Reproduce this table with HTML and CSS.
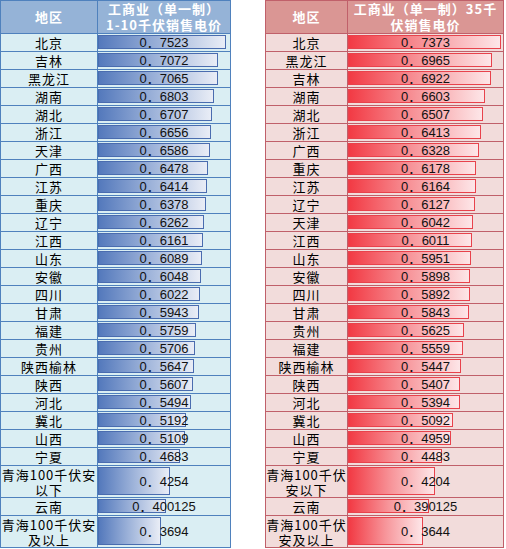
FILE: index.html
```html
<!DOCTYPE html>
<html lang="zh-CN">
<head>
<meta charset="utf-8">
<title>工商业销售电价</title>
<link rel="stylesheet" href="styles.css">
</head>
<body>
<div class="page">
  <div class="sheet blue">
    <div class="hd">地区</div>
    <div class="hd hd-val">工商业（单一制）<br>1-10千伏销售电价</div>
    <div class="nm">北京</div><div class="vl"><span class="bar" style="width:128px"></span><span class="num">0．7523</span></div>
    <div class="nm">吉林</div><div class="vl"><span class="bar" style="width:120px"></span><span class="num">0．7072</span></div>
    <div class="nm">黑龙江</div><div class="vl"><span class="bar" style="width:120px"></span><span class="num">0．7065</span></div>
    <div class="nm">湖南</div><div class="vl"><span class="bar" style="width:116px"></span><span class="num">0．6803</span></div>
    <div class="nm">湖北</div><div class="vl"><span class="bar" style="width:114px"></span><span class="num">0．6707</span></div>
    <div class="nm">浙江</div><div class="vl"><span class="bar" style="width:113px"></span><span class="num">0．6656</span></div>
    <div class="nm">天津</div><div class="vl"><span class="bar" style="width:112px"></span><span class="num">0．6586</span></div>
    <div class="nm">广西</div><div class="vl"><span class="bar" style="width:110px"></span><span class="num">0．6478</span></div>
    <div class="nm">江苏</div><div class="vl"><span class="bar" style="width:109px"></span><span class="num">0．6414</span></div>
    <div class="nm">重庆</div><div class="vl"><span class="bar" style="width:108px"></span><span class="num">0．6378</span></div>
    <div class="nm">辽宁</div><div class="vl"><span class="bar" style="width:106px"></span><span class="num">0．6262</span></div>
    <div class="nm">江西</div><div class="vl"><span class="bar" style="width:105px"></span><span class="num">0．6161</span></div>
    <div class="nm">山东</div><div class="vl"><span class="bar" style="width:104px"></span><span class="num">0．6089</span></div>
    <div class="nm">安徽</div><div class="vl"><span class="bar" style="width:103px"></span><span class="num">0．6048</span></div>
    <div class="nm">四川</div><div class="vl"><span class="bar" style="width:102px"></span><span class="num">0．6022</span></div>
    <div class="nm">甘肃</div><div class="vl"><span class="bar" style="width:101px"></span><span class="num">0．5943</span></div>
    <div class="nm">福建</div><div class="vl"><span class="bar" style="width:98px"></span><span class="num">0．5759</span></div>
    <div class="nm">贵州</div><div class="vl"><span class="bar" style="width:97px"></span><span class="num">0．5706</span></div>
    <div class="nm">陕西榆林</div><div class="vl"><span class="bar" style="width:96px"></span><span class="num">0．5647</span></div>
    <div class="nm">陕西</div><div class="vl"><span class="bar" style="width:95px"></span><span class="num">0．5607</span></div>
    <div class="nm">河北</div><div class="vl"><span class="bar" style="width:93px"></span><span class="num">0．5494</span></div>
    <div class="nm">冀北</div><div class="vl"><span class="bar" style="width:88px"></span><span class="num">0．5192</span></div>
    <div class="nm">山西</div><div class="vl"><span class="bar" style="width:87px"></span><span class="num">0．5109</span></div>
    <div class="nm">宁夏</div><div class="vl"><span class="bar" style="width:82px"></span><span class="num">0．4683</span></div>
    <div class="nm tall">青海100千伏安<br>以下</div><div class="vl tall"><span class="bar" style="width:72px"></span><span class="num">0．4254</span></div>
    <div class="nm">云南</div><div class="vl"><span class="bar" style="width:68px"></span><span class="num">0．400125</span></div>
    <div class="nm tall">青海100千伏安<br>及以上</div><div class="vl tall"><span class="bar" style="width:63px"></span><span class="num">0．3694</span></div>
  </div>

  <div class="sheet red">
    <div class="hd">地区</div>
    <div class="hd hd-val">工商业（单一制）35千<br>伏销售电价</div>
    <div class="nm">北京</div><div class="vl"><span class="bar" style="width:153px"></span><span class="num">0．7373</span></div>
    <div class="nm">黑龙江</div><div class="vl"><span class="bar" style="width:144px"></span><span class="num">0．6965</span></div>
    <div class="nm">吉林</div><div class="vl"><span class="bar" style="width:143px"></span><span class="num">0．6922</span></div>
    <div class="nm">湖南</div><div class="vl"><span class="bar" style="width:137px"></span><span class="num">0．6603</span></div>
    <div class="nm">湖北</div><div class="vl"><span class="bar" style="width:135px"></span><span class="num">0．6507</span></div>
    <div class="nm">浙江</div><div class="vl"><span class="bar" style="width:133px"></span><span class="num">0．6413</span></div>
    <div class="nm">广西</div><div class="vl"><span class="bar" style="width:131px"></span><span class="num">0．6328</span></div>
    <div class="nm">重庆</div><div class="vl"><span class="bar" style="width:128px"></span><span class="num">0．6178</span></div>
    <div class="nm">江苏</div><div class="vl"><span class="bar" style="width:128px"></span><span class="num">0．6164</span></div>
    <div class="nm">辽宁</div><div class="vl"><span class="bar" style="width:127px"></span><span class="num">0．6127</span></div>
    <div class="nm">天津</div><div class="vl"><span class="bar" style="width:125px"></span><span class="num">0．6042</span></div>
    <div class="nm">江西</div><div class="vl"><span class="bar" style="width:124px"></span><span class="num">0．6011</span></div>
    <div class="nm">山东</div><div class="vl"><span class="bar" style="width:123px"></span><span class="num">0．5951</span></div>
    <div class="nm">安徽</div><div class="vl"><span class="bar" style="width:122px"></span><span class="num">0．5898</span></div>
    <div class="nm">四川</div><div class="vl"><span class="bar" style="width:122px"></span><span class="num">0．5892</span></div>
    <div class="nm">甘肃</div><div class="vl"><span class="bar" style="width:121px"></span><span class="num">0．5843</span></div>
    <div class="nm">贵州</div><div class="vl"><span class="bar" style="width:116px"></span><span class="num">0．5625</span></div>
    <div class="nm">福建</div><div class="vl"><span class="bar" style="width:115px"></span><span class="num">0．5559</span></div>
    <div class="nm">陕西榆林</div><div class="vl"><span class="bar" style="width:113px"></span><span class="num">0．5447</span></div>
    <div class="nm">陕西</div><div class="vl"><span class="bar" style="width:112px"></span><span class="num">0．5407</span></div>
    <div class="nm">河北</div><div class="vl"><span class="bar" style="width:112px"></span><span class="num">0．5394</span></div>
    <div class="nm">冀北</div><div class="vl"><span class="bar" style="width:105px"></span><span class="num">0．5092</span></div>
    <div class="nm">山西</div><div class="vl"><span class="bar" style="width:103px"></span><span class="num">0．4959</span></div>
    <div class="nm">宁夏</div><div class="vl"><span class="bar" style="width:94px"></span><span class="num">0．4483</span></div>
    <div class="nm tall">青海100千伏<br>安以下</div><div class="vl tall"><span class="bar" style="width:87px"></span><span class="num">0．4204</span></div>
    <div class="nm">云南</div><div class="vl"><span class="bar" style="width:81px"></span><span class="num">0．390125</span></div>
    <div class="nm tall">青海100千伏<br>安及以上</div><div class="vl tall"><span class="bar" style="width:75px"></span><span class="num">0．3644</span></div>
  </div>
</div>
</body>
</html>
```

FILE: styles.css
```css
html, body {
  margin: 0;
  padding: 0;
  background: #ffffff;
}

.page {
  display: flex;
  align-items: flex-start;
  gap: 34px;
  font-family: "Noto Sans CJK SC", "Noto Sans", sans-serif;
  color: #000;
}

.sheet {
  display: grid;
  grid-auto-rows: auto;
  gap: 1px;
  padding: 1px;
}

.sheet.blue {
  grid-template-columns: 96px 132px;
  background: #4f81bd;
}

.sheet.red {
  grid-template-columns: 81px 155px;
  background: #c0606a;
}

.hd {
  height: 32px;
  display: flex;
  align-items: center;
  justify-content: center;
  text-align: center;
  color: #ffffff;
  font-weight: bold;
  font-size: 13px;
  line-height: 16px;
  letter-spacing: 1px;
  white-space: nowrap;
}

.blue .hd { background: #95b3d7; }
.red .hd { background: #da9694; }

.nm, .vl {
  height: 17px;
  display: flex;
  align-items: center;
  justify-content: center;
  text-align: center;
  white-space: nowrap;
}

.blue .nm, .blue .vl { background: #daeef3; }
.red .nm, .red .vl { background: #f2dcdb; }

.nm {
  font-size: 13px;
  line-height: 16px;
  letter-spacing: 1px;
}

.nm.tall, .vl.tall {
  height: 31px;
}

.nm.tall {
  line-height: 15px;
}

.vl {
  position: relative;
  overflow: hidden;
}

.bar {
  position: absolute;
  left: 0;
  top: 1px;
  bottom: 2px;
  box-sizing: border-box;
}

.blue .bar {
  background: linear-gradient(to right, #5479bc 0%, #9fb4da 50%, #e9edf6 100%);
  border: 1px solid #4a6caf;
}

.red .bar {
  background: linear-gradient(to right, #f23a44 0%, #f7959a 50%, #fde6e8 100%);
  border: 1px solid #e8424c;
}

.num {
  position: relative;
  font-family: "Liberation Sans", "Noto Sans CJK SC", sans-serif;
  font-size: 13px;
  line-height: 16px;
  color: #111;
}
```
